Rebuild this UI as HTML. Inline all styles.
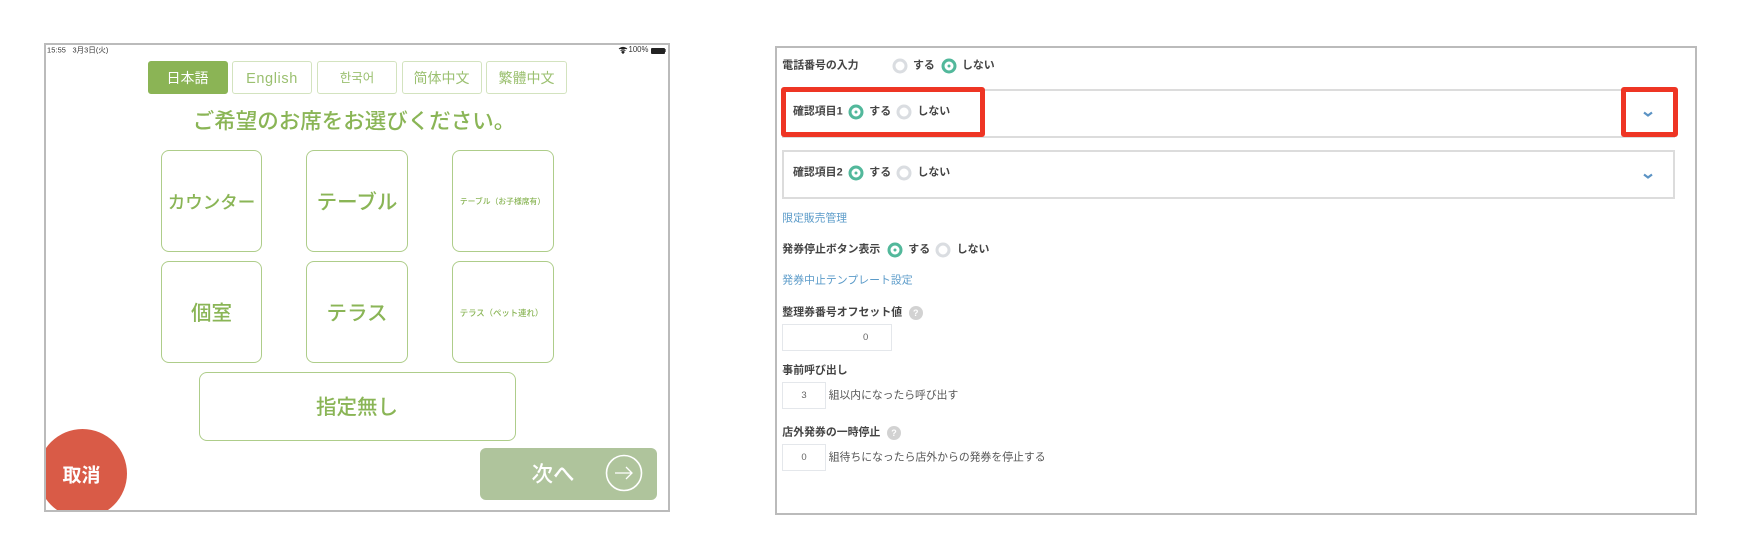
<!DOCTYPE html>
<html lang="ja"><head><meta charset="utf-8"><title>設定</title>
<style>
html,body{margin:0;padding:0;background:#fff}
body{width:1738px;height:560px;overflow:hidden;position:relative;font-family:"Liberation Sans","Noto Sans CJK JP",sans-serif}
#w{position:absolute;left:0;top:0;width:1738px;height:560px;filter:blur(.3px)}
div,span{box-sizing:border-box}
.a{position:absolute}
.t{position:absolute;white-space:nowrap;line-height:1;transform:translateY(-50%)}
.c{position:absolute;white-space:nowrap;line-height:1;transform:translate(-50%,-50%);color:#8ab556;font-weight:500}
.frame{position:absolute;border:2px solid #bbb}
.tab{position:absolute;top:61px;width:80px;height:33px;border:1px solid #d3e3bf;border-radius:3px;display:flex;align-items:center;justify-content:center;color:#9bc070;background:#fff;line-height:1}
.box{position:absolute;border:1px solid #aecd8a;border-radius:8px;background:#fff}
.b{font-size:10.9px;font-weight:700;color:#444}
.r{font-size:10.8px;color:#555}
.l{font-size:10.8px;color:#5b9bc9}
.on,.off{position:absolute;width:15px;height:15px;border-radius:50%;background:#fff;transform:translate(-50%,-50%)}
.on{border:3px solid #52b89b}
.on:after{content:"";position:absolute;left:3px;top:3px;width:3px;height:3px;border-radius:50%;background:#52b89b}
.off{border:3px solid #dadde1}
.panel{position:absolute;left:782px;width:893px;height:49px;border:2px solid #dcdcdc;background:#fff}
.red{position:absolute;border:5px solid #ee3524;border-radius:3px}
.inp{position:absolute;left:782px;height:27px;border:1px solid #e4e7eb;background:#fff;color:#666;font-size:9.5px;line-height:25px}
.help{position:absolute;width:14px;height:14px;border-radius:50%;background:#d2d2d2;color:#fff;font-size:9px;font-weight:700;line-height:14px;text-align:center;transform:translate(-50%,-50%)}
</style></head><body><div id="w">

<div class="frame" style="left:44px;top:43px;width:626px;height:469px;overflow:hidden">
<div class="a" style="left:-8px;top:384px;width:89px;height:89px;border-radius:50%;background:#d95b47"></div>
</div>

<div class="t" style="left:47px;top:50px;font-size:7.4px;color:#333;letter-spacing:.1px">15:55&nbsp;&nbsp;&nbsp;3月3日(火)</div>
<svg class="a" style="left:618px;top:46px" width="10" height="8" viewBox="0 0 10 8"><path d="M1 3C3.5 .8 6.5 .8 9 3M2.6 4.6C4 3.4 6 3.4 7.4 4.6M5 7.4L3.8 6C4.5 5.4 5.5 5.4 6.2 6Z" fill="#222" stroke="#222" stroke-width="1"/></svg>
<div class="t" style="left:628.5px;top:50px;font-size:7.8px;color:#333">100%</div>
<div class="a" style="left:651px;top:47.5px;width:13.5px;height:6px;background:#222;border-radius:1px"></div>
<div class="a" style="left:664.5px;top:49px;width:1px;height:3px;background:#777"></div>

<div class="tab" style="left:147.5px;background:#8bb455;border-color:#8bb455;color:#fff;font-size:14px">日本語</div>
<div class="tab" style="left:232px;letter-spacing:.6px;font-size:14.5px;padding-top:3px">English</div>
<div class="tab" style="left:317px;font-size:12.5px;font-family:'Liberation Sans','Noto Sans CJK KR',sans-serif;padding-top:1px">한국어</div>
<div class="tab" style="left:401.5px;font-size:14px;font-family:'Liberation Sans','Noto Sans CJK SC',sans-serif;padding-top:1px">简体中文</div>
<div class="tab" style="left:486px;width:81px;font-size:14px;font-family:'Liberation Sans','Noto Sans CJK TC',sans-serif;padding-top:1px">繁體中文</div>

<div class="c" style="left:354px;top:122px;font-size:21.5px">ご希望のお席をお選びください。</div>

<div class="box" style="left:161px;top:150px;width:101px;height:101.5px"></div>
<div class="box" style="left:306px;top:150px;width:101.5px;height:101.5px"></div>
<div class="box" style="left:452px;top:150px;width:101.5px;height:101.5px"></div>
<div class="box" style="left:161px;top:261px;width:101px;height:101.5px"></div>
<div class="box" style="left:306px;top:261px;width:101.5px;height:101.5px"></div>
<div class="box" style="left:452px;top:261px;width:101.5px;height:101.5px"></div>
<div class="box" style="left:199px;top:372px;width:317px;height:69px"></div>

<div class="c" style="left:211.5px;top:202.5px;font-size:17.5px">カウンター</div>
<div class="c" style="left:357px;top:203px;font-size:20.5px">テーブル</div>
<div class="c" style="left:502.5px;top:201.5px;font-size:7.8px">テーブル（お子様席有）</div>
<div class="c" style="left:211.5px;top:313.5px;font-size:20.5px">個室</div>
<div class="c" style="left:357px;top:313.5px;font-size:20.5px">テラス</div>
<div class="c" style="left:501.5px;top:312.5px;font-size:8.4px">テラス（ペット連れ）</div>
<div class="c" style="left:357px;top:408px;font-size:20.5px">指定無し</div>

<div class="c" style="left:81.5px;top:476px;font-size:19px;color:#fff;font-weight:700">取消</div>

<div class="a" style="left:480px;top:447.5px;width:177px;height:52.5px;background:#afc49c;border-radius:6px"></div>
<div class="c" style="left:553px;top:474.5px;font-size:21.5px;color:#fff">次へ</div>
<svg class="a" style="left:604px;top:453px" width="40" height="40" viewBox="0 0 40 40" fill="none" stroke="#fff"><circle cx="20" cy="20" r="17.5" stroke-width="1.6"/><path d="M11 20H28M22 14L28 20L22 26" stroke-width="1.3"/></svg>

<div class="frame" style="left:775px;top:46px;width:922px;height:469px"></div>

<div class="t b" style="left:782.3px;top:66px">電話番号の入力</div>
<div class="off" style="left:900.3px;top:65.5px"></div>
<div class="t b" style="left:913px;top:66px">する</div>
<div class="on" style="left:948.7px;top:65.5px"></div>
<div class="t b" style="left:962px;top:66px">しない</div>

<div class="panel" style="top:89px"></div>
<div class="panel" style="top:150px"></div>

<div class="t b" style="left:793px;top:112px">確認項目1</div>
<div class="on" style="left:856.3px;top:111.5px"></div>
<div class="t b" style="left:869.3px;top:112px">する</div>
<div class="off" style="left:904.3px;top:111.5px"></div>
<div class="t b" style="left:917.5px;top:112px">しない</div>

<div class="t b" style="left:793px;top:173px">確認項目2</div>
<div class="on" style="left:856.3px;top:172.5px"></div>
<div class="t b" style="left:869.3px;top:173px">する</div>
<div class="off" style="left:904.3px;top:172.5px"></div>
<div class="t b" style="left:917.5px;top:173px">しない</div>

<svg class="a" style="left:1642px;top:110px" width="12" height="9" viewBox="0 0 12 9" fill="none" stroke="#5b93c4" stroke-width="2.2"><path d="M2 2.5L6 5.5L10 2.5"/></svg>
<svg class="a" style="left:1642px;top:171.5px" width="12" height="9" viewBox="0 0 12 9" fill="none" stroke="#5b93c4" stroke-width="2.2"><path d="M2 2.5L6 5.5L10 2.5"/></svg>

<div class="red" style="left:781px;top:87px;width:204px;height:50px"></div>
<div class="red" style="left:1621px;top:87px;width:56.5px;height:50px"></div>

<div class="t l" style="left:782.3px;top:219px">限定販売管理</div>

<div class="t b" style="left:782.3px;top:250px">発券停止ボタン表示</div>
<div class="on" style="left:895px;top:250px"></div>
<div class="t b" style="left:908.3px;top:250px">する</div>
<div class="off" style="left:943px;top:250px"></div>
<div class="t b" style="left:956.7px;top:250px">しない</div>

<div class="t l" style="left:782.3px;top:281px;font-size:10.9px">発券中止テンプレート設定</div>

<div class="t b" style="left:782.3px;top:313px">整理券番号オフセット値</div>
<div class="help" style="left:915.7px;top:312.7px">?</div>
<div class="inp" style="top:324px;width:110px;padding-left:80px">0</div>

<div class="t b" style="left:782.3px;top:371px">事前呼び出し</div>
<div class="inp" style="top:382px;width:44px;text-align:center">3</div>
<div class="t r" style="left:828.7px;top:396px">組以内になったら呼び出す</div>

<div class="t b" style="left:782.3px;top:433px">店外発券の一時停止</div>
<div class="help" style="left:894px;top:432.7px">?</div>
<div class="inp" style="top:444px;width:44px;text-align:center">0</div>
<div class="t r" style="left:828.7px;top:457.5px;font-size:10.85px">組待ちになったら店外からの発券を停止する</div>

</div></body></html>
